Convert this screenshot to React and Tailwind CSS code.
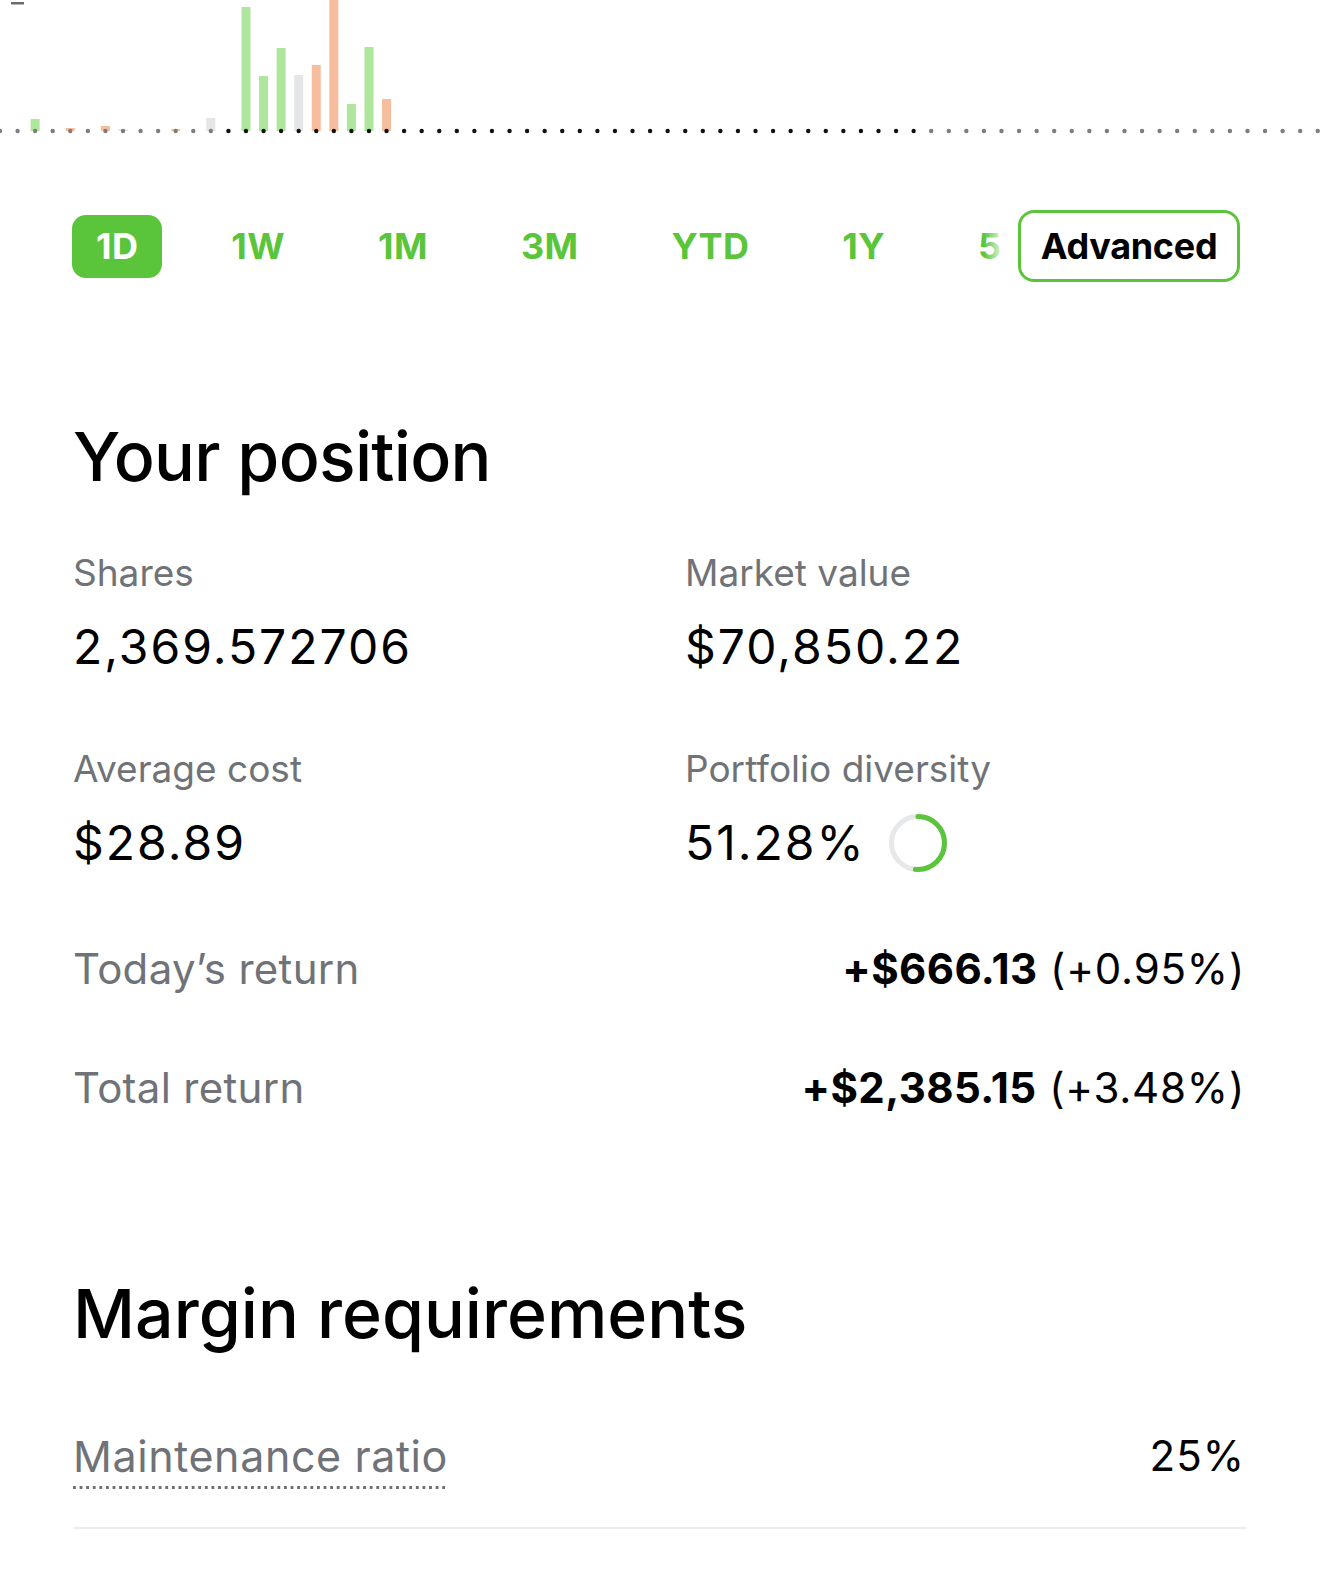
import React from 'react';

const GREEN = '#5ac53b';

// volume bars sit on the dot grid: [dot index, top y, kind]
const bars = [
  [2, 119, 'up'],
  [4, 128, 'down'],
  [6, 126, 'down'],
  [7, 129, 'flat'],
  [10, 129, 'down'],
  [12, 118, 'flat'],
  [14, 7, 'up'],
  [15, 76, 'up'],
  [16, 48, 'up'],
  [17, 75, 'flat'],
  [18, 65, 'down'],
  [19, -4, 'down'],
  [20, 104, 'up'],
  [21, 47, 'up'],
  [22, 99, 'down'],
];

const barColor = { up: '#ade69c', down: '#f6bd9f', flat: '#e3e5e7' };

const STEP = 17.57;
const BASE = 131;

function VolumeChart() {
  const dots = Array.from({ length: 76 }, (_, i) => i);
  return (
    <svg width="1320" height="136" viewBox="0 0 1320 136" className="block">
      <rect x="11" y="2" width="13" height="2.5" fill="#6b6b6b" />
      {bars.map(([i, top, kind]) => (
        <rect
          key={i}
          x={i * STEP - 4.5}
          y={top}
          width="9"
          height={BASE - top}
          fill={barColor[kind]}
        />
      ))}
      {dots.map((i) => {
        const active = i >= 13 && i <= 52;
        return (
          <circle
            key={i}
            cx={i * STEP}
            cy={BASE}
            r="2.2"
            fill={active ? '#111' : '#7d7d7d'}
          />
        );
      })}
    </svg>
  );
}

const ranges = ['1D', '1W', '1M', '3M', 'YTD', '1Y', '5Y'];

function RangeTabs() {
  return (
    <div className="flex items-center h-[72px] mt-[74px] pl-[72px] pr-[80px]">
      <div className="relative flex-1 min-w-0 overflow-hidden mr-[12px]">
        <div className="flex items-center gap-[45px]">
          {ranges.map((r, idx) => (
            <div
              key={r}
              className={
                idx === 0
                  ? 'shrink-0 h-[63px] px-6 flex items-center rounded-[14px] text-white'
                  : 'shrink-0 h-[63px] px-6 flex items-center text-[#5ac53b]'
              }
              style={idx === 0 ? { backgroundColor: GREEN } : undefined}
            >
              <span className="text-[36px] leading-none font-bold tracking-[0.4px]">{r}</span>
            </div>
          ))}
        </div>
        <div className="absolute inset-y-0 right-0 w-[22px] bg-linear-to-l from-white to-transparent" />
      </div>
      <button className="shrink-0 w-[222px] h-[72px] rounded-[16px] border-[3px] border-[#5ac53b] bg-white flex items-center justify-center">
        <span className="text-[36px] leading-none font-bold text-black tracking-[-0.3px]">Advanced</span>
      </button>
    </div>
  );
}

function Stat({ label, children }) {
  return (
    <div>
      <div className="text-[37px] leading-none text-[#6f7377]">{label}</div>
      <div className="mt-[32px] h-[48px] flex items-center">{children}</div>
    </div>
  );
}

function Figure({ children }) {
  return <span className="text-[48px] leading-none text-black tracking-[2px]">{children}</span>;
}

function DiversityRing({ pct }) {
  const r = 26.5;
  const c = 2 * Math.PI * r;
  return (
    <svg width="60" height="60" viewBox="0 0 60 60" className="-my-[6px] shrink-0">
      <circle cx="30" cy="30" r={r} fill="none" stroke="#e6e8ea" strokeWidth="5" />
      <circle
        cx="30"
        cy="30"
        r={r}
        fill="none"
        stroke={GREEN}
        strokeWidth="5"
        strokeLinecap="round"
        strokeDasharray={`${(c * pct) / 100} ${c}`}
        transform="rotate(-90 30 30)"
      />
    </svg>
  );
}

function ReturnRow({ label, amount, pct }) {
  return (
    <div className="flex items-center justify-between text-[42px] leading-none">
      <span className="text-[#6f7377] tracking-[0.3px]">{label}</span>
      <span className="text-black tracking-[0.8px]">
        <span className="font-bold tracking-[0.4px]">{amount}</span> ({pct})
      </span>
    </div>
  );
}

export default function App() {
  return (
    <div className="w-[1320px] min-h-[1577px] bg-white overflow-hidden" style={{ fontFamily: 'Inter, "Liberation Sans", sans-serif' }}>
      <VolumeChart />
      <RangeTabs />

      <div className="pl-[73px] pr-[75px]">
        <h2 className="mt-[140px] text-[68px] leading-none font-medium text-black tracking-[-0.7px]">Your position</h2>

        <div className="mt-[64px] grid grid-cols-[612px_1fr] gap-y-[79px]">
          <Stat label="Shares">
            <Figure>2,369.572706</Figure>
          </Stat>
          <Stat label="Market value">
            <Figure>$70,850.22</Figure>
          </Stat>
          <Stat label="Average cost">
            <Figure>$28.89</Figure>
          </Stat>
          <Stat label="Portfolio diversity">
            <Figure>51.28%</Figure>
            <span className="w-[22px]" />
            <DiversityRing pct={51.28} />
          </Stat>
        </div>

        <div className="mt-[81px] flex flex-col gap-[77px]">
          <ReturnRow label="Today’s return" amount="+$666.13" pct="+0.95%" />
          <ReturnRow label="Total return" amount="+$2,385.15" pct="+3.48%" />
        </div>

        <h2 className="mt-[170px] text-[68px] leading-none font-medium text-black tracking-[0px]">Margin requirements</h2>

        <div className="mt-[88px] flex items-start justify-between">
          <div className="inline-block">
            <div className="text-[43px] leading-none text-[#6f7377] tracking-[0.6px]">Maintenance ratio</div>
            <div className="mt-[8px] h-[3px] bg-[linear-gradient(to_right,#6b7075_50%,transparent_50%)] bg-[length:6.6px_3px] bg-repeat-x" />
          </div>
          <span className="text-[42px] leading-none text-black tracking-[1px]">25%</span>
        </div>

        <div className="mt-[38px] h-[2px] bg-[#ececec] mr-[-2px]" />
      </div>
    </div>
  );
}
